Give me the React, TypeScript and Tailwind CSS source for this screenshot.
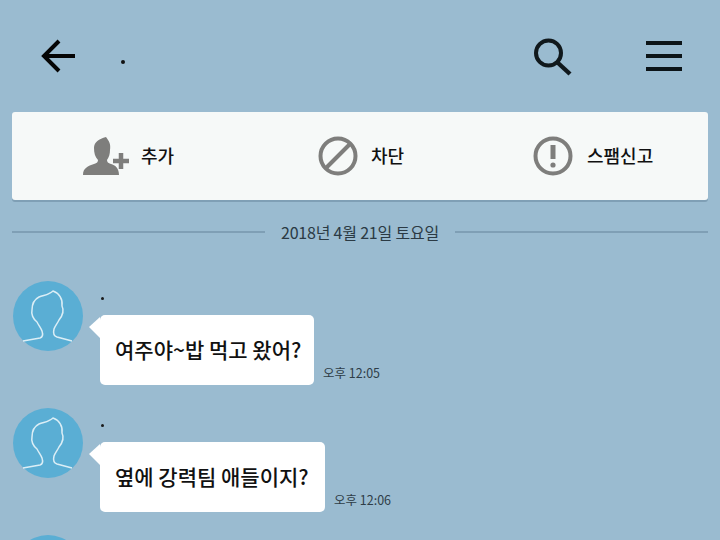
const font = "font-['Noto_Sans_CJK_KR','Noto_Sans',sans-serif]";

function Avatar() {
  return (
    <svg width="70" height="70" viewBox="0 0 70 70" className="shrink-0">
      <circle cx="35" cy="35" r="35" fill="#5aaed4" />
      <path
        d="M10 60 L27 57 C30 56 30 53 29 50 C28 47 26 45 24 41 C20 38 18 33 19 29 C19 23 22 18 26 16 C31 14 36 14 40 10 C46 12 50 18 49 25 C51 29 50 34 46 39 C44 43 42 45 41 48 C40 52 41 55 44 56 L59 60"
        fill="none"
        stroke="#dbeef6"
        strokeWidth="1.5"
        strokeLinejoin="round"
      />
    </svg>
  );
}

function Message({ text, time, gap, width }: { text: string; time: string; gap: string; width: string }) {
  return (
    <div className={`flex ${gap}`}>
      <Avatar />
      <div className="ml-[17px] flex flex-col">
        <div className="flex h-[34px] items-start pt-[16px] text-[0px]">
          <span className="ml-[1px] h-[3px] w-[3px] rounded-full bg-[#1a1a1a]" />
        </div>
        <div className="flex items-end">
          <div className={`relative flex h-[70px] items-center rounded-[5px] bg-white pl-[15px] ${width}`}>
            <span className="absolute left-[-11px] top-[2px] h-0 w-0 border-t-[10px] border-b-[11px] border-r-[11px] border-l-0 border-t-transparent border-b-transparent border-r-white" />
            <span className="whitespace-nowrap pb-[2px] text-[21px] font-medium leading-none text-[#111]">{text}</span>
          </div>
          <span className="ml-[9px] whitespace-nowrap pb-[2px] text-[12.5px] leading-[20px] text-[#2e3d47]">{time}</span>
        </div>
      </div>
    </div>
  );
}

export default function App() {
  return (
    <div className={`${font} flex h-[540px] w-[720px] flex-col overflow-hidden bg-[#9abbd0]`}>
      <header className="flex h-[112px] shrink-0 items-start pt-[38px]">
        <svg width="36" height="36" viewBox="0 0 36 36" className="ml-[41px]">
          <path d="M34 18 H4 M18 3 L3 18 L18 33" fill="none" stroke="#050505" strokeWidth="4" />
        </svg>
        <span className="ml-[44px] mt-[22px] h-[4px] w-[4px] rounded-full bg-[#111]" />
        <svg width="40" height="40" viewBox="0 0 40 40" className="ml-[408px]">
          <circle cx="15.5" cy="15" r="12.5" fill="none" stroke="#10181c" strokeWidth="4" />
          <path d="M24.5 24.5 L37 36" stroke="#10181c" strokeWidth="4.4" />
        </svg>
        <div className="ml-[73px] mt-[3px] flex h-[30px] w-[36px] flex-col justify-between">
          <span className="h-[4px] bg-[#0c1418]" />
          <span className="h-[4px] bg-[#0c1418]" />
          <span className="h-[4px] bg-[#0c1418]" />
        </div>
      </header>

      <div className="mx-[12px] flex h-[88px] shrink-0 items-center rounded-[3px] bg-[#f6f9f8] shadow-[0_2px_0_#7f9fb5]">
        <div className="ml-[70px] flex w-[236px] items-center">
          <svg width="48" height="40" viewBox="0 0 48 40">
            <path d="M1 39 C1 32 6 30 12 28 C15 27 16 26 16 24 C13 21 12 17 12 12 C12 6 17 3 24 1 C27 5 29 8 28 14 C28 18 27 21 25 24 C25 26 26 27 29 28 C33 29 37 32 37 39 Z" fill="#7e7e7c" />
            <path d="M39 17 V33 M31 25 H47" stroke="#7e7e7c" strokeWidth="4.5" />
          </svg>
          <span className="ml-[11px] pb-[3px] text-[18px] font-medium leading-none text-[#111]">추가</span>
        </div>
        <div className="flex w-[215px] items-center">
          <svg width="40" height="40" viewBox="0 0 40 40">
            <circle cx="20" cy="20" r="17.5" fill="none" stroke="#7e7e7c" strokeWidth="4" />
            <path d="M8 32 L32 8" stroke="#7e7e7c" strokeWidth="4" />
          </svg>
          <span className="ml-[13px] pb-[3px] text-[18px] font-medium leading-none text-[#111]">차단</span>
        </div>
        <div className="flex items-center">
          <svg width="40" height="40" viewBox="0 0 40 40">
            <circle cx="20" cy="20" r="17.5" fill="none" stroke="#7e7e7c" strokeWidth="4" />
            <path d="M20 9 V23" stroke="#7e7e7c" strokeWidth="5" />
            <circle cx="20" cy="29" r="2.6" fill="#7e7e7c" />
          </svg>
          <span className="ml-[14px] pb-[3px] text-[18px] font-medium leading-none text-[#111]">스팸신고</span>
        </div>
      </div>

      <div className="mx-[12px] mt-[20px] flex h-[24px] shrink-0 items-center">
        <span className="h-[2px] flex-1 bg-[#7f9fb5]" />
        <span className="mx-[16px] text-[16px] leading-none tracking-[-0.2px] text-[#2b3a44]">2018년 4월 21일 토요일</span>
        <span className="h-[2px] flex-1 bg-[#7f9fb5]" />
      </div>

      <div className="ml-[13px] flex flex-col">
        <Message gap="mt-[37px]" width="w-[214px]" text="여주야~밥 먹고 왔어?" time="오후 12:05" />
        <Message gap="mt-[23px]" width="w-[225px]" text="옆에 강력팀 애들이지?" time="오후 12:06" />
        <div className="mt-[23px] flex">
          <Avatar />
        </div>
      </div>
    </div>
  );
}
